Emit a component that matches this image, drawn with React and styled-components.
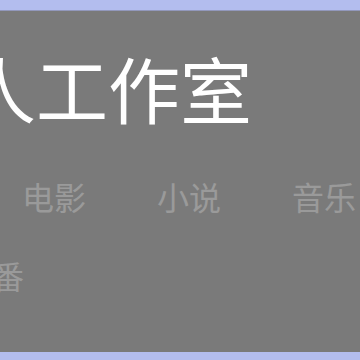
import React from "react";
import styled, { createGlobalStyle } from "styled-components";

const Global = createGlobalStyle`
  html, body { margin: 0; padding: 0; background: #b3bdee; }
  body { width: 360px; height: 360px; overflow: hidden; font-family: "Noto Sans CJK SC", "Noto Sans", sans-serif; }
`;

const Page = styled.div`
  width: 360px;
  height: 360px;
  padding: 10px 0 8px;
  box-sizing: border-box;
  background: #b3bdee;
`;

const Panel = styled.section`
  height: 342px;
  background: #7a7a7a;
  border-top: 1px solid #9298bc;
  box-sizing: border-box;
  overflow: hidden;
`;

const Inner = styled.div`
  margin-left: -108px;
  padding-top: 40px;
  display: flex;
  flex-direction: column;
  width: 600px;
`;

const Title = styled.h1`
  margin: 0;
  font-size: 72px;
  line-height: 72px;
  font-weight: 400;
  color: #ffffff;
  white-space: nowrap;
`;

const Nav = styled.nav`
  margin-top: 57px;
  display: flex;
  flex-direction: column;
  gap: 47px;
`;

const NavRow = styled.div`
  display: flex;
  gap: 71px;
  margin-left: ${(p) => p.$indent}px;
`;

const NavItem = styled.a`
  font-size: 32px;
  line-height: 32px;
  color: #9a9a9a;
  white-space: nowrap;
  text-decoration: none;
`;

export default function App() {
  return (
    <>
      <Global />
      <Page>
        <Panel>
          <Inner>
            <Title>个人工作室</Title>
            <Nav>
              <NavRow $indent={-5}>
                <NavItem>首页</NavItem>
                <NavItem>电影</NavItem>
                <NavItem>小说</NavItem>
                <NavItem>音乐</NavItem>
              </NavRow>
              <NavRow $indent={68}>
                <NavItem>新番</NavItem>
              </NavRow>
            </Nav>
          </Inner>
        </Panel>
      </Page>
    </>
  );
}
